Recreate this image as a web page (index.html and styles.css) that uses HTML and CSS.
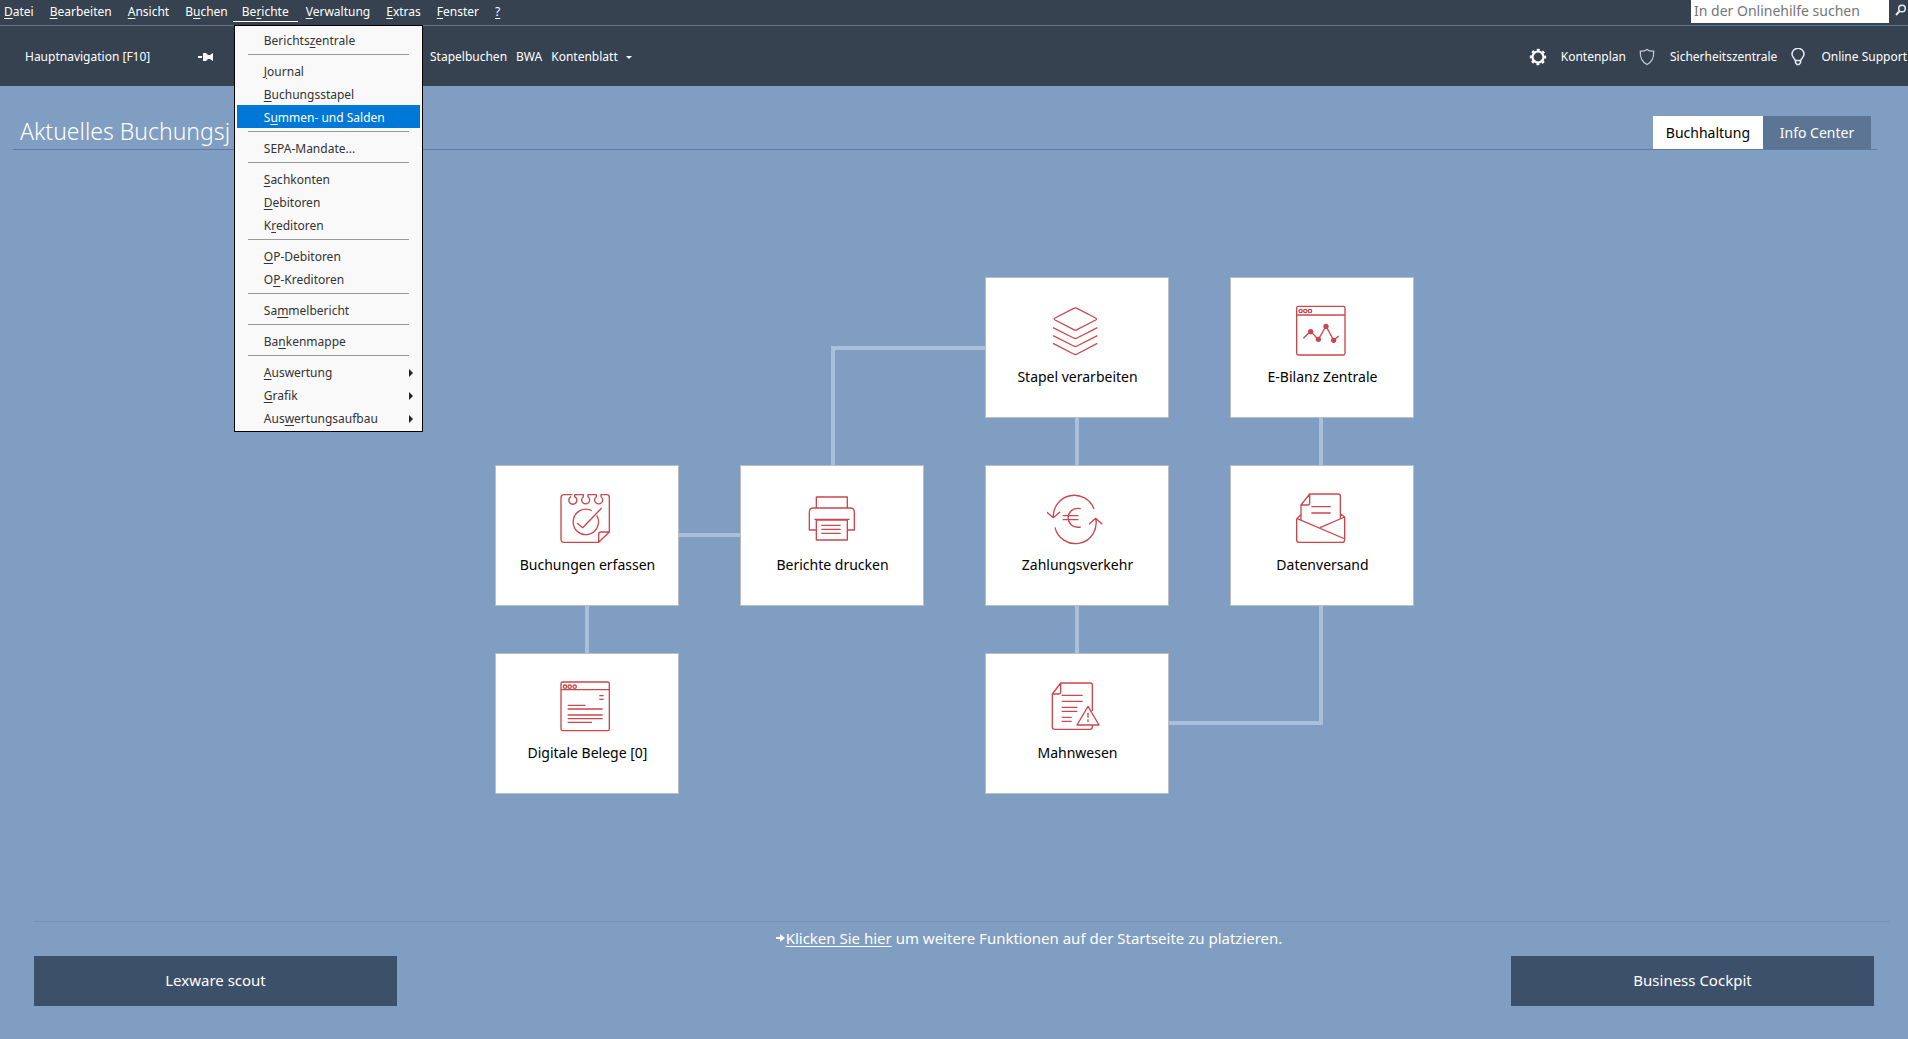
FILE: index.html
```html
<!DOCTYPE html>
<html lang="de">
<head>
<meta charset="utf-8">
<title>Lexware Buchhaltung</title>
<meta name="viewport" content="width=device-width, initial-scale=1">
<link rel="stylesheet" href="styles.css">
</head>
<body>
<header>
  <div class="menubar">
    <nav class="menus" aria-label="Hauptmenü">
      <button class="menu-button"><u>D</u>atei</button>
      <button class="menu-button"><u>B</u>earbeiten</button>
      <button class="menu-button"><u>A</u>nsicht</button>
      <button class="menu-button">B<u>u</u>chen</button>
      <div class="menu-anchor">
        <button class="menu-button is-open" aria-expanded="true">Be<u>r</u>ichte</button>
        <div class="dropdown">
          <button class="entry">Berichts<u>z</u>entrale</button>
          <hr class="divider">
          <button class="entry"><u>J</u>ournal</button>
          <button class="entry"><u>B</u>uchungsstapel</button>
          <button class="entry is-active">S<u>u</u>mmen- und Salden</button>
          <hr class="divider">
          <button class="entry">SEPA-Mandate...</button>
          <hr class="divider">
          <button class="entry"><u>S</u>achkonten</button>
          <button class="entry"><u>D</u>ebitoren</button>
          <button class="entry">K<u>r</u>editoren</button>
          <hr class="divider">
          <button class="entry"><u>O</u>P-Debitoren</button>
          <button class="entry">O<u>P</u>-Kreditoren</button>
          <hr class="divider">
          <button class="entry">Sa<u>m</u>melbericht</button>
          <hr class="divider">
          <button class="entry">Ba<u>n</u>kenmappe</button>
          <hr class="divider">
          <button class="entry has-sub"><span><u>A</u>uswertung</span></button>
          <button class="entry has-sub"><span><u>G</u>rafik</span></button>
          <button class="entry has-sub"><span>Aus<u>w</u>ertungsaufbau</span></button>
        </div>
      </div>
      <button class="menu-button"><u>V</u>erwaltung</button>
      <button class="menu-button"><u>E</u>xtras</button>
      <button class="menu-button"><u>F</u>enster</button>
      <button class="menu-button"><u>?</u></button>
    </nav>
    <form class="search">
      <input class="search-field" type="text" placeholder="In der Onlinehilfe suchen" aria-label="In der Onlinehilfe suchen">
      <button class="search-button" type="button" aria-label="Suchen">
        <svg width="12" height="12" viewBox="0 0 12 12" fill="none" stroke="#e6eaf0"><circle cx="7" cy="4.500" r="3.300" stroke-width="1.500"/><path d="M4.600 7 1 11" stroke-width="2"/></svg>
      </button>
    </form>
  </div>
  <div class="toolbar">
    <div class="mainnav">
      <button class="tool">Hauptnavigation [F10]</button>
      <button class="tool" aria-label="Anheften">
        <svg width="18" height="12" viewBox="0 0 18 12" fill="#fff"><path d="M1 5h4v2H1zM6 2h3l2 2h2l3-2v8l-3-2h-2l-2 2H6z"/></svg>
      </button>
    </div>
    <div class="quicklinks">
      <button class="tool">Stapelbuchen</button>
      <button class="tool">BWA</button>
      <button class="tool with-caret">Kontenblatt</button>
    </div>
    <div class="services">
      <button class="tool service">
        <svg width="18" height="18" viewBox="0 0 18 18" fill="none" stroke="#fff"><circle cx="9" cy="9" r="5.500" stroke-width="2.200"/><circle cx="9" cy="9" r="7.200" stroke-width="2" stroke-dasharray="2.830 2.830" transform="rotate(-11 9 9)"/></svg>
        <span>Kontenplan</span>
      </button>
      <button class="tool service">
        <svg width="18" height="18" viewBox="0 0 18 18" fill="none" stroke="#c4cad1" stroke-width="1.300"><path d="M9 1.500C7 3 4.500 3.300 2.300 3.200c-.2 6.300 1 10.300 6.700 13.300 5.700-3 6.900-7 6.700-13.300C13.500 3.300 11 3 9 1.500z"/></svg>
        <span>Sicherheitszentrale</span>
      </button>
      <button class="tool service">
        <svg width="18" height="18" viewBox="0 0 18 18" fill="none" stroke="#e6eaf0" stroke-width="1.500"><path d="M6.200 12.500c0-2-3.200-3-3.200-6.200a6 6 0 0 1 12 0c0 3.200-3.200 4.200-3.200 6.200zM6.500 12.500v2.200l1.500 1.800h2l1.500-1.800v-2.200"/></svg>
        <span>Online Support</span>
      </button>
    </div>
  </div>
</header>

<main class="page">
  <div class="page-head">
    <h1 class="title">Aktuelles Buchungsj</h1>
    <div class="tabs" role="tablist">
      <button class="tab is-selected" role="tab" aria-selected="true">Buchhaltung</button>
      <button class="tab" role="tab" aria-selected="false">Info Center</button>
    </div>
  </div>

  <section class="flow" aria-label="Funktionen">
    <svg class="links" viewBox="0 0 919 517" fill="none" stroke="#a9bfda" stroke-width="4" aria-hidden="true">
      <path d="M338 188V71h152M184 258h62M92 329v47M582 141v47M582 329v47M826 141v47M674 446h152V329"/>
    </svg>
    <button class="card stapel">
      <svg class="icon" viewBox="261 124 180 180"><path d="M341 146q5-3 10 0l56 29q5 3 0 6l-56 29q-5 3-10 0l-56-29q-5-3 0-6zM279 204l62 31q5 3 10 0l61-31M279 228l62 31q5 3 10 0l61-31M279 251l62 32q5 3 10 0l61-32"/></svg>
      <span class="label">Stapel verarbeiten</span>
    </button>
    <button class="card ebilanz">
      <svg class="icon" viewBox="995 124 180 180"><rect x="1009" y="140" width="145" height="146" rx="5"/><path d="M1009 166h145M1029 236l22-21 23 25 23-41 23 43 15-13"/><circle cx="1021" cy="154" r="5"/><circle cx="1035" cy="154" r="5"/><circle cx="1049" cy="154" r="5"/><g fill="#c9474d"><circle cx="1051" cy="216" r="6"/><circle cx="1074" cy="239" r="6"/><circle cx="1097" cy="200" r="6"/><circle cx="1120" cy="242" r="6"/></g></svg>
      <span class="label">E-Bilanz Zentrale</span>
    </button>
    <button class="card buchungen">
      <svg class="icon" viewBox="231 117 180 180"><path d="M277 134h-25q-9 0-9 9v124q0 10 9 10h104l32-31V142q0-8-8-8h-17v6a12 12 0 1 1-14 0v-6h-25v6a12 12 0 1 1-14 0v-6h-26v6a12 12 0 1 1-11 0M356 277v-24q0-7 7-7h25M347 187M335 182a38 38 0 1 0 15 14M291 219l17 14 57-59"/></svg>
      <span class="label">Buchungen erfassen</span>
    </button>
    <button class="card berichte">
      <svg class="icon" viewBox="966 117 180 180"><path d="M1009 173v-32h93v32M1009 240h-21v-54q0-12 12-12h111q12 0 12 12v54h-21M1003 208h106M1009 210h93v60h-93zM1024 226h58M1024 238h58M1024 250h58"/></svg>
      <span class="label">Berichte drucken</span>
    </button>
    <button class="card zahlung">
      <svg class="icon" viewBox="261 688 180 180"><path d="M402 748a63 63 0 0 0-122 25M260 757l20 17 20-17M285 803a62 62 0 0 0 122-27M387 794l20-18 20 18M362 747c-50-9-50 64 0 55M308 768h47M308 780h47"/></svg>
      <span class="label">Zahlungsverkehr</span>
    </button>
    <button class="card daten">
      <svg class="icon" viewBox="995 688 180 180"><path d="M1022 780v-44l26-33h86q6 0 6 6v68M1022 736h21q5 0 5-5v-28M1053 741h58M1053 760h58M1022 764l-13 14v62q0 8 8 8h128q8 0 8-8v-68l-13-10M1009 776l145 62M1079 804l74-32"/></svg>
      <span class="label">Datenversand</span>
    </button>
    <button class="card belege">
      <svg class="icon" viewBox="231 680 180 180"><rect x="243" y="695" width="145" height="146" rx="5"/><path d="M243 718h145M358 736h13M358 747h13M263 765h53M263 776h105M263 794h105M263 805h105M263 816h73"/><circle cx="255" cy="709" r="5"/><circle cx="269" cy="709" r="5"/><circle cx="284" cy="709" r="5"/></svg>
      <span class="label">Digitale Belege [0]</span>
    </button>
    <button class="card mahn">
      <svg class="icon" viewBox="261 170 180 180"><path d="M397 272v-78q0-6-6-6h-89l-25 33v99q0 7 7 7h106q7 0 7-7v-5M277 221h20q5 0 5-5v-28M305 225h63M305 243h63M305 261h47M305 273h47M305 291h30M305 303h30M384 258l33 56h-66zM384 277v15M384 297v8"/></svg>
      <span class="label">Mahnwesen</span>
    </button>
  </section>

  <footer class="foot">
    <p class="hint">
      <svg width="9" height="10" viewBox="0 0 9 10" fill="#fff" aria-hidden="true"><path d="M0 4h4V1l5 4-5 4V6H0z"/></svg><span><a class="hint-link" href="#">Klicken Sie hier</a> um weitere Funktionen auf der Startseite zu platzieren.</span>
    </p>
    <div class="actions">
      <button class="action">Lexware scout</button>
      <button class="action">Business Cockpit</button>
    </div>
  </footer>
</main>
</body>
</html>
```
FILE: styles.css
```css
* { box-sizing: border-box; }

body {
  margin: 0;
  min-height: 100vh;
  display: flex;
  flex-direction: column;
  background: #809ec2;
  color: #fff;
  font: 12px/18px "Noto Sans", "Open Sans", sans-serif;
  overflow-x: hidden;
}

button {
  margin: 0;
  padding: 0;
  border: 0;
  background: none;
  color: inherit;
  font: inherit;
  white-space: nowrap;
  cursor: pointer;
}

svg { display: block; flex: none; }
u { text-underline-offset: 2px; }

/* Menu bar */
.menubar {
  display: flex;
  justify-content: space-between;
  height: 26px;
  background: #364250;
  border-bottom: 1px solid #62748b;
}
.menus { display: flex; padding-left: 4px; }
.menu-button {
  height: 22px;
  padding: 2px 8px 0;
  border-bottom: 1px solid transparent;
}
.menus > .menu-button:first-child { padding-left: 0; }
.menu-button.is-open { padding: 2px 9px 0; border-bottom-color: #fff; }
.menu-anchor { position: relative; margin-left: -3px; }

.search { display: flex; }
.search-field {
  width: 198px;
  height: 23px;
  padding: 0 3px 2px;
  border: 0;
  background: #fff;
  font: 14px/20px "Noto Sans", sans-serif;
}
.search-field::placeholder { color: #757575; opacity: 1; }
.search-button { width: 19px; padding: 4px 0 0 6px; display: flex; }

/* Open drop-down */
.dropdown {
  position: absolute;
  z-index: 2;
  top: 25px;
  left: 1px;
  width: 189px;
  padding: 2px;
  display: flex;
  flex-direction: column;
  background: #f9f9f9;
  border: 1px solid #000;
  color: #333;
}
.entry {
  height: 23px;
  padding: 2px 7px 0 27px;
  text-align: left;
}
.entry.is-active { background: #0078d7; color: #fff; }
.entry.has-sub { display: flex; align-items: center; justify-content: space-between; }
.entry.has-sub::after {
  content: "";
  border: solid transparent;
  border-width: 4px 0 4px 4px;
  border-left-color: #222;
}
.divider {
  width: 161px;
  margin: 3px 0 4px 11px;
  border: 0;
  border-top: 1px solid #999;
}

/* Toolbar */
.toolbar {
  display: flex;
  align-items: center;
  height: 60px;
  padding: 2px 1px 0 0;
  background: #364250;
}
.mainnav {
  display: flex;
  align-items: center;
  justify-content: space-between;
  width: 430px;
  padding: 0 215px 0 25px;
}
.quicklinks { display: flex; gap: 9px; }
.with-caret { display: flex; align-items: center; gap: 8px; }
.with-caret::after {
  content: "";
  border: solid transparent;
  border-width: 3px 3px 0;
  border-top-color: #fff;
}
.services { display: flex; gap: 12px; margin-left: auto; }
.service { display: flex; align-items: center; gap: 14px; }

/* Page */
.page {
  flex: 1;
  display: flex;
  flex-direction: column;
  padding-top: 30px;
}
.page-head {
  display: flex;
  justify-content: space-between;
  margin: 0 31px 0 13px;
  padding: 0 6px 0 7px;
  border-bottom: 1px solid #5b7ba3;
}
.title { margin: 0; font: 300 23px/31px "Noto Sans", sans-serif; }
.tabs { display: flex; }
.tab {
  height: 33px;
  min-width: 108px;
  padding: 0 13px;
  background: #5d7594;
  font-size: 14px;
}
.tab.is-selected { background: #fff; color: #000; }

/* Process diagram */
.flow {
  position: relative;
  display: grid;
  grid-template-columns: repeat(4, 184px);
  grid-template-rows: repeat(3, 141px);
  grid-template-areas:
    ". . stapel ebilanz"
    "buchungen berichte zahlung daten"
    "belege . mahn .";
  gap: 47px 61px;
  margin: auto;
}
.links { position: absolute; inset: 0; width: 100%; height: 100%; }
.card {
  position: relative;
  display: flex;
  flex-direction: column;
  align-items: center;
  gap: 6px;
  padding-top: 23px;
  border: 1px solid #b9bdc4;
  background: #fff;
  color: #000;
  font-size: 14px;
  line-height: 20px;
}
.label { padding-left: 2px; }
.icon {
  width: 60px;
  height: 60px;
  fill: none;
  stroke: #c9474d;
  stroke-width: 4;
  stroke-linejoin: round;
}
.stapel { grid-area: stapel; }
.ebilanz { grid-area: ebilanz; }
.buchungen { grid-area: buchungen; }
.berichte { grid-area: berichte; }
.zahlung { grid-area: zahlung; }
.daten { grid-area: daten; }
.belege { grid-area: belege; }
.mahn { grid-area: mahn; }

/* Footer */
.foot {
  margin: 0 18px 33px 34px;
  border-top: 1px solid #7390b5;
  font-size: 15px;
}
.hint {
  display: flex;
  align-items: center;
  justify-content: center;
  gap: 1px;
  margin: 0;
  padding: 4px 0 6px 134px;
  line-height: 24px;
}
.hint-link { color: inherit; text-underline-offset: 2px; }
.actions { display: flex; justify-content: space-between; padding-right: 16px; }
.action {
  width: 363px;
  height: 50px;
  padding-bottom: 3px;
  background: #3d5069;
}
```
